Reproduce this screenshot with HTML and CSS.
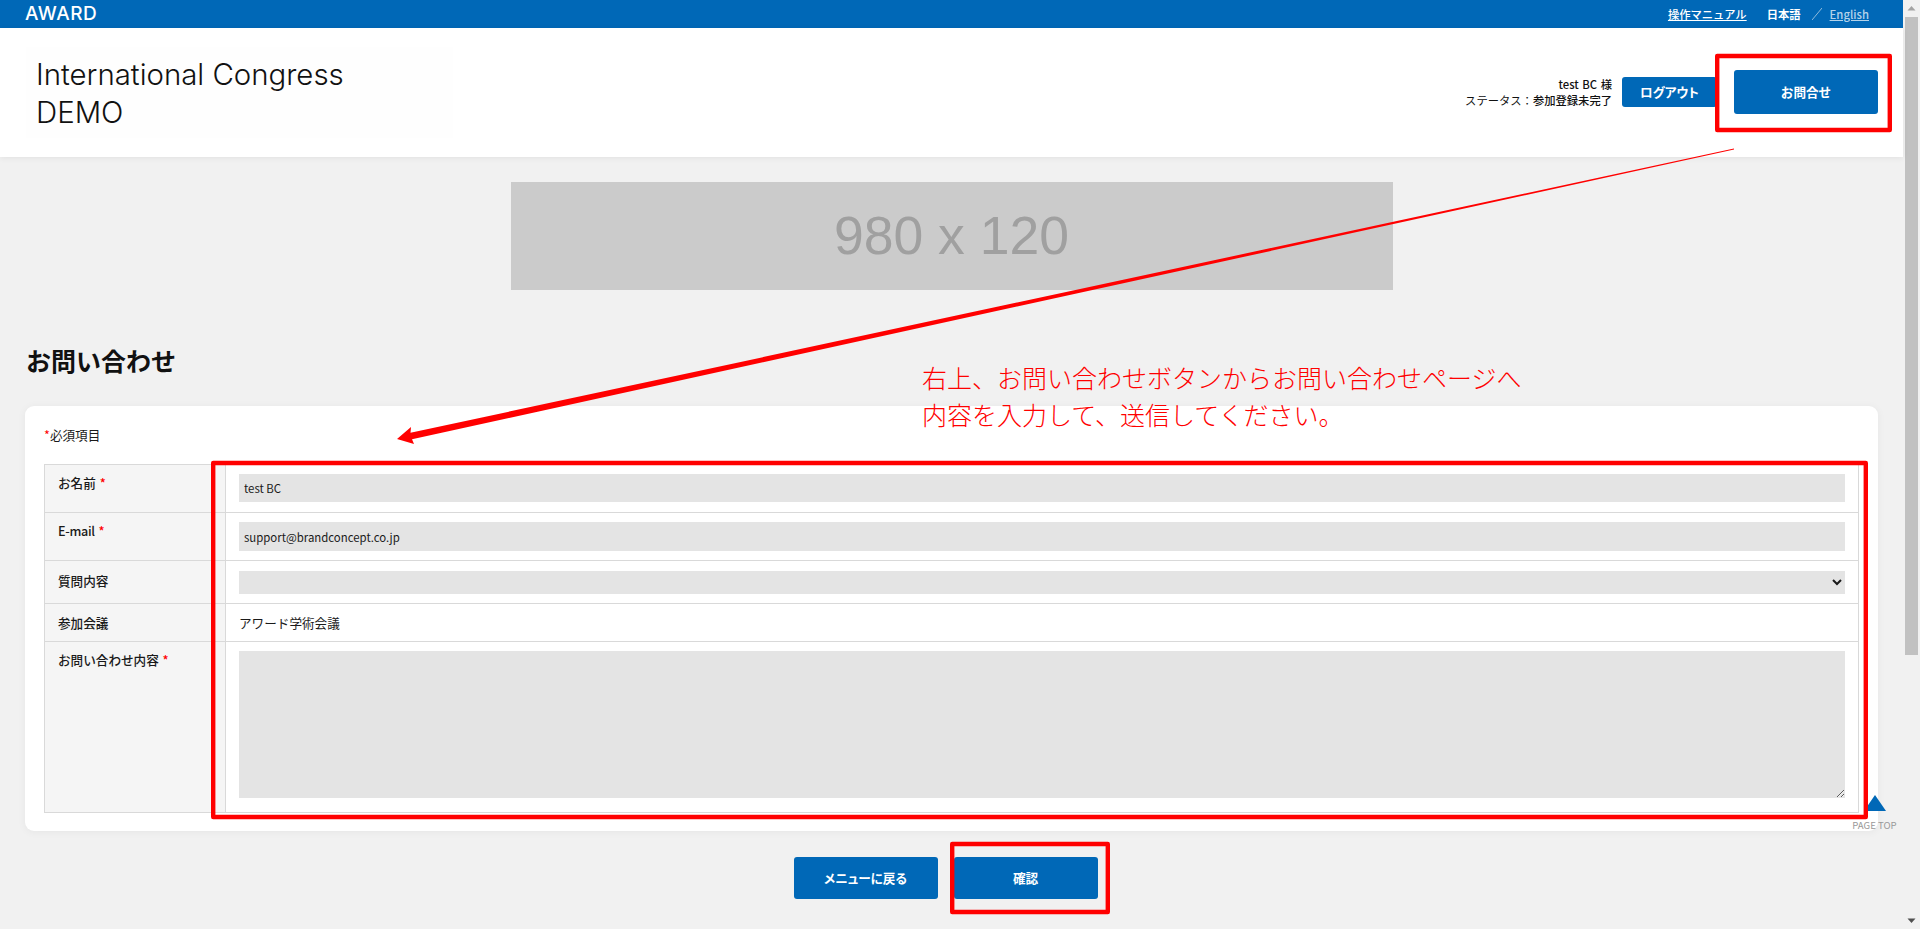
FILE: index.html
```html
<!DOCTYPE html>
<html lang="ja">
<head>
<meta charset="utf-8">
<title>お問い合わせ</title>
<link rel="stylesheet" href="styles.css">
</head>
<body>
<div class="window">
  <div class="page">
    <div class="topbar">
      <a class="brand">AWARD</a>
      <nav class="topnav">
        <a class="manual">操作マニュアル</a>
        <span class="lang-current">日本語</span>
        <svg class="lang-sep" width="10" height="12" viewBox="0 0 10 12"><path d="M0 12 10 0" stroke="#8fbbdc" stroke-width="1" fill="none"/></svg>
        <a class="lang-link">English</a>
      </nav>
    </div>
    <header class="site-header">
      <div class="congress">International Congress<br>DEMO</div>
      <div class="user-area">
        <div class="user-info">
          <div class="user-name">test BC 様</div>
          <div class="user-status"><span class="status-key">ステータス：</span>参加登録未完了</div>
        </div>
        <a class="btn btn-logout btn-kana">ログアウト</a>
        <a class="btn btn-contact">お問合せ</a>
      </div>
    </header>
    <main class="main">
      <div class="banner">980 x 120</div>
      <h1 class="page-title">お問い合わせ</h1>
      <section class="card">
        <p class="required-note"><span class="req-mark">*</span>必須項目</p>
        <table class="form-table">
          <colgroup><col class="col-label"><col></colgroup>
          <tr class="row-name">
            <th>お名前 <span class="req">*</span></th>
            <td><input class="field field-name" type="text" value="test BC" readonly></td>
          </tr>
          <tr class="row-mail">
            <th><span class="latin-label">E-mail</span> <span class="req">*</span></th>
            <td><input class="field field-mail" type="text" value="support@brandconcept.co.jp" readonly></td>
          </tr>
          <tr class="row-select">
            <th>質問内容</th>
            <td><select class="field field-select"><option></option></select></td>
          </tr>
          <tr class="row-text">
            <th>参加会議</th>
            <td>アワード学術会議</td>
          </tr>
          <tr class="row-area">
            <th>お問い合わせ内容 <span class="req">*</span></th>
            <td><textarea class="field field-area"></textarea></td>
          </tr>
        </table>
      </section>
      <div class="actions">
        <a class="btn btn-action btn-kana">メニューに戻る</a>
        <a class="btn btn-action btn-confirm">確認</a>
      </div>
    </main>
    <a class="pagetop">
      <svg class="pagetop-icon" width="22" height="16" viewBox="0 0 22 16"><path d="M11 0 22 16H0Z" fill="#0068b7"/></svg>
      <span>PAGE TOP</span>
    </a>
  </div>
  <aside class="scrollbar">
    <svg class="sb-arrow" width="17" height="17" viewBox="0 0 17 17"><path d="M4.5 10.5 8.5 6l4 4.5Z" fill="#a3a3a3"/></svg>
    <div class="sb-track"><div class="sb-thumb"></div></div>
    <svg class="sb-arrow" width="17" height="17" viewBox="0 0 17 17"><path d="M4.5 6.5h8l-4 4.5Z" fill="#505050"/></svg>
  </aside>
  <svg class="markup" width="1920" height="929" viewBox="0 0 1920 929">
    <path d="M1734 148.6 410.5 432.8 411 427 397 439 414 444 412 439.2 1734 149.4Z" fill="#ff0000"/>
    <g fill="none" stroke="#ff0000" stroke-width="4.4" stroke-linejoin="round">
      <rect x="1717.2" y="56" width="172.6" height="74"/>
      <rect x="213.2" y="463" width="1652.6" height="354"/>
      <rect x="952.2" y="844" width="155.6" height="68"/>
    </g>
  </svg>
  <p class="note">右上、お問い合わせボタンからお問い合わせページへ<br>内容を入力して、送信してください。</p>
</div>
</body>
</html>
```
FILE: styles.css
```css
* { box-sizing: border-box; }
html, body { margin: 0; padding: 0; height: 929px; overflow: hidden; }
body {
  background: #f1f1f1;
  color: #1a1a1a;
  font-family: "Noto Sans CJK JP", "Noto Sans", sans-serif;
  font-size: 12.6px;
  line-height: 18px;
}
.window { position: relative; display: flex; width: 1920px; height: 929px; overflow: hidden; }
.page { position: relative; flex: 1; min-width: 0; }

.topbar {
  display: flex;
  align-items: center;
  height: 28px;
  padding: 0 34px 0 25px;
  background: #0068b7;
  color: #fff;
}
.brand {
  font-family: "Inter", "Liberation Sans", sans-serif;
  font-size: 19px;
  font-weight: 500;
  letter-spacing: 0.5px;
  line-height: 28px;
}
.topnav { display: flex; align-items: center; margin-left: auto; font-size: 11.3px; font-weight: 500; }
.manual { text-decoration: underline; margin-right: 20px; }
.lang-current { font-weight: 700; }
.lang-sep { margin: 0 8px 0 11px; }
.lang-link { color: #b5d3ea; text-decoration: underline; }

.site-header {
  position: relative;
  display: flex;
  align-items: center;
  justify-content: space-between;
  height: 129px;
  padding: 0 25px 0 26px;
  background: #fff;
  box-shadow: 0 1px 6px rgba(0, 0, 0, 0.07);
}
.congress {
  width: 427px;
  height: 91px;
  padding: 9px 0 0 10px;
  background: #fefefe;
  color: #111;
  font-family: "Inter", "Noto Sans", sans-serif;
  font-size: 29.4px;
  font-weight: 300;
  line-height: 38px;
}
.user-area { display: flex; align-items: center; margin-bottom: 1px; }
.user-info { margin-right: 10px; text-align: right; font-size: 11.3px; line-height: 16px; font-weight: 500; color: #111; }
.user-name { word-spacing: 1px; }
.status-key { font-weight: 400; }
.btn {
  display: flex;
  align-items: center;
  justify-content: center;
  background: #0068b7;
  border-radius: 3px;
  color: #fff;
  font-size: 12.6px;
  font-weight: 700;
}
.btn-kana { font-feature-settings: "palt"; }
.btn-logout { width: 95px; height: 30px; margin-right: 17px; }
.btn-contact { width: 144px; height: 44px; }

.main { padding: 25px 25px 0; }
.banner {
  display: flex;
  align-items: center;
  justify-content: center;
  width: 882px;
  height: 108px;
  margin: 0 auto;
  background: #cbcbcb;
  color: #a0a0a0;
  font-family: "Liberation Sans", Arial, sans-serif;
  font-size: 53.5px;
}
.page-title {
  margin: 53px 0 29px;
  padding-left: 1px;
  font-size: 25px;
  font-weight: 700;
  line-height: 34px;
  color: #111;
}
.card {
  padding: 20px 19px 18px 19px;
  background: #fff;
  border-radius: 9px;
  box-shadow: 0 1px 8px rgba(0, 0, 0, 0.05);
}
.required-note { margin: 0 0 20px; }
.req-mark { color: #f00; }
.form-table { width: 100%; border-collapse: collapse; table-layout: fixed; }
.col-label { width: 181px; }
.form-table th, .form-table td { border: 1px solid #d9d9d9; padding: 0; }
.form-table th {
  padding: 9px 0 0 13px;
  background: #f5f5f5;
  font-weight: 500;
  text-align: left;
  vertical-align: top;
}
.form-table td { padding: 0 13px 0 13px; vertical-align: top; }
.req { margin-left: 1px; color: #f00; }
.latin-label { letter-spacing: -0.3px; }
.field {
  display: block;
  width: 100%;
  padding: 0 5px;
  border: 0;
  border-radius: 0;
  outline: 0;
  background-color: #e4e4e4;
  color: #1a1a1a;
  font-family: inherit;
  font-size: 11.4px;
}
.row-name { height: 48px; }
.row-mail { height: 48px; }
.row-select { height: 43px; }
.row-text { height: 38px; }
.row-area { height: 171px; }
.row-name td { padding-top: 9px; }
.row-mail td { padding-top: 9px; }
.row-select td { padding-top: 10px; }
.row-area td { padding-top: 9px; }
.row-text th, .row-text td { vertical-align: middle; padding-top: 0; padding-bottom: 0; }
.row-select th { vertical-align: middle; padding-top: 0; padding-bottom: 3px; }
.field-name { height: 28px; }
.field-mail { height: 29px; }
.field-select { height: 23px; padding: 0; }
.field-area { height: 147px; resize: vertical; }

.actions { display: flex; justify-content: center; gap: 16px; padding: 26px 12px 0 0; }
.btn-action { width: 144px; height: 42px; }

.pagetop {
  position: absolute;
  left: 1853px;
  top: 795px;
  display: flex;
  flex-direction: column;
  align-items: center;
  width: 43px;
  color: #999;
  font-size: 9.6px;
  line-height: 14px;
  white-space: nowrap;
}
.pagetop-icon { display: block; margin-bottom: 7px; }

.scrollbar { display: flex; flex-direction: column; flex: none; width: 17px; background: #f1f1f1; }
.sb-arrow { display: block; flex: none; }
.sb-track { flex: 1; padding-left: 2px; }
.sb-thumb { width: 13px; height: 638px; background: #c1c1c1; }

.markup { position: absolute; left: 0; top: 0; pointer-events: none; }
.note {
  position: absolute;
  left: 922px;
  top: 359px;
  margin: 0;
  color: #f00;
  font-size: 25px;
  font-weight: 300;
  line-height: 36.5px;
  white-space: nowrap;
}
```
